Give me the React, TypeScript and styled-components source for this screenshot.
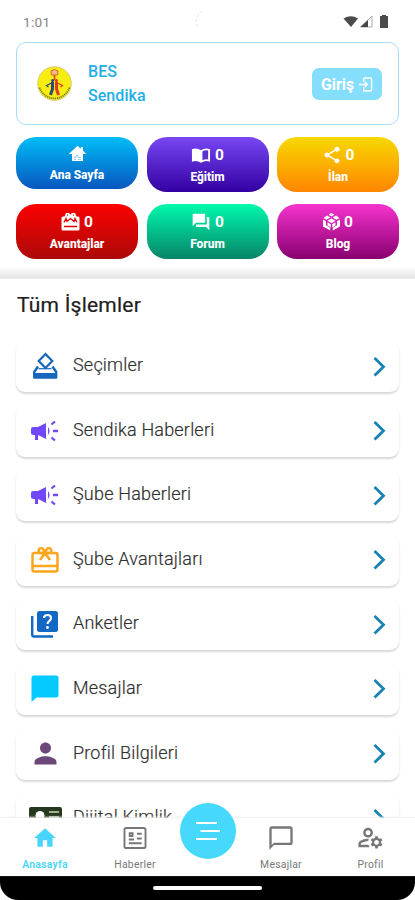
import React from "react";
import styled, { createGlobalStyle } from "styled-components";
import { MdHome, MdShare, MdForum, MdPerson, MdOutlineManageAccounts, MdChatBubbleOutline } from "react-icons/md";

const GlobalStyle = createGlobalStyle`
  * { box-sizing: border-box; }
  body { margin: 0; background: #fff; font-family: Roboto, sans-serif; overflow: hidden; }
  svg { display: block; flex: none; }
`;

const Screen = styled.main`
  width: 415px;
  height: 900px;
  display: flex;
  flex-direction: column;
  overflow: hidden;
  background: #fff;
`;

const StatusBar = styled.header`
  height: 42px;
  padding: 2px 26px 0 23px;
  display: grid;
  grid-template-columns: 172px 1fr auto;
  flex: none;
  align-items: center;
  color: #858585;
  font-size: 13.6px;
  letter-spacing: 0.3px;
`;

const ProfileCard = styled.section`
  height: 83px;
  flex: none;
  margin: 0 16px;
  padding: 0 16px 0 20px;
  display: flex;
  align-items: center;
  border: 1.5px solid #a5ddfb;
  border-radius: 10px;
`;

const Organisation = styled.div`
  flex: 1;
  margin: 1px 0 0 16px;
  color: #22aee6;
  font-size: 16px;
  font-weight: 500;
  line-height: 24px;
  letter-spacing: 0.05px;
`;

const LoginButton = styled.button`
  width: 70px;
  height: 32px;
  padding: 2px 0 0;
  border: 0;
  border-radius: 7px;
  display: flex;
  align-items: center;
  justify-content: center;
  gap: 5px;
  background: #86defd;
  color: #fff;
  font: 700 15.8px Roboto, sans-serif;
`;

const TileGrid = styled.section`
  flex: none;
  height: 143px;
  padding: 12px 16px 0;
  display: grid;
  grid-template-columns: repeat(3, 122px);
  grid-template-rows: 55px 55px;
  justify-content: space-between;
  row-gap: 12px;
`;

const Tile = styled.div<{ $from: string; $to: string; $short?: boolean }>`
  height: ${p => (p.$short ? 52 : 55)}px;
  padding-top: ${p => (p.$short ? 6 : 8)}px;
  border-radius: 20px;
  background: linear-gradient(${p => p.$from}, ${p => p.$to});
  color: #fff;
  display: flex;
  flex-direction: column;
  align-items: center;
  gap: 5px;
`;

const TileTop = styled.div`
  height: 20px;
  display: flex;
  align-items: center;
  gap: 4px;
  font-size: 15.5px;
  font-weight: 700;
`;

const TileLabel = styled.span`
  font-size: 12px;
  line-height: 15px;
  font-weight: 800;
  letter-spacing: -0.05px;
`;

const Divider = styled.div`
  height: 11px;
  flex: none;
  background: linear-gradient(#fafafa, #e5e5e5 90%, #eee);
`;

const Operations = styled.section`
  flex: 1;
  min-height: 0;
  overflow: hidden;
  padding: 11px 16px 0;
`;

const Title = styled.h1`
  margin: 0 0 20px 1px;
  color: #202020;
  font-size: 21px;
  line-height: 31px;
  font-weight: 400;
  letter-spacing: 0.22px;
  -webkit-text-stroke: 0.2px #202020;
`;

const List = styled.div`
  display: flex;
  flex-direction: column;
  gap: 13.6px;
`;

const Row = styled.div`
  height: 51px;
  flex: none;
  padding: 0 9px 2px 13px;
  display: flex;
  align-items: center;
  border-radius: 9px;
  box-shadow: 0 2px 2px #d9d9d9, 0 0 1px #f7f7f7;
  background: #fff;
`;

const IconSlot = styled.span<{ $color: string }>`
  width: 32px;
  margin-right: 12px;
  display: flex;
  justify-content: center;
  padding-top: 1px;
  color: ${p => p.$color};
`;

const RowLabel = styled.span`
  flex: 1;
  color: #303030;
  font-size: 18px;
  font-weight: 300;
  letter-spacing: 0.2px;
  -webkit-text-stroke: 0.2px #303030;
  padding-bottom: 2px;
`;

const BottomNav = styled.nav`
  height: 58px;
  flex: none;
  position: relative;
  display: grid;
  grid-template-columns: 90px 90px 56px 90px 89px;
  background: #fff;
  box-shadow: 0 -1px 2px #eee;
`;

const NavItem = styled.div<{ $active?: boolean }>`
  display: flex;
  flex-direction: column;
  align-items: center;
  padding-top: 4px;
  color: ${p => (p.$active ? "#49d5fa" : "#777")};
  font-size: 10.4px;
  font-weight: ${p => (p.$active ? 600 : 400)};
  line-height: 14px;
  letter-spacing: 0.25px;
`;

const NavIcon = styled.span`
  height: 31px;
  margin-bottom: 5px;
  display: flex;
  align-items: center;
`;

const MenuButton = styled.button`
  width: 56px;
  height: 56px;
  margin-top: -15px;
  padding: 0;
  border: 0;
  border-radius: 50%;
  display: grid;
  place-items: center;
  background: #46d9fc;
`;

const GestureBar = styled.footer`
  height: 24px;
  flex: none;
  display: flex;
  justify-content: center;
  padding-top: 10px;
  background: #000;
  border-radius: 0 0 18px 18px;
`;

const Handle = styled.span`
  width: 109px;
  height: 4px;
  border-radius: 2px;
  background: #fff;
`;

const StatusIcons = () => (
  <svg width="46" height="16" viewBox="0 0 46 16">
    <path d="M.5 4.5Q8 0 15 4.5L8 13z" fill="#4b4b4b" />
    <path d="M17.5 13L29 2v11z" fill="none" stroke="#aaa" />
    <path d="M17.5 13L25 6v7z" fill="#444" />
    <path d="M37 2h2V1h4v1h2v12h-8z" fill="#4b4b4b" />
  </svg>
);

const CameraHint = () => (
  <svg width="22" height="24" viewBox="0 0 22 24" fill="none" stroke="#ddd" strokeWidth="0.8">
    <path d="M7 1Q-2 8 3 18" strokeDasharray="3 2" />
  </svg>
);

const Emblem = () => (
  <svg width="35" height="35" viewBox="0 0 35 35">
    <circle cx="17.5" cy="17.5" r="16.8" fill="#f7ed10" stroke="#d3cc79" strokeWidth="1" />
    <path d="M2.5 21.5C8 36 27 36 32.5 21.5" fill="none" stroke="#82851e" strokeWidth="1.8" strokeDasharray="1.3 .7" />
    <path d="M14 5l3.5-1.5L21 5l-.5 4h-6z" fill="#f8b98a" stroke="#d54b28" strokeWidth=".8" />
    <path d="M17.5 9v5" stroke="#df482c" strokeWidth="1.7" />
    <circle cx="15.6" cy="14.5" r="1.5" fill="#234b73" />
    <circle cx="19.4" cy="14.5" r="1.5" fill="#dc3325" />
    <path d="M15.5 16v7l-2 6" fill="none" stroke="#274d70" strokeWidth="3" />
    <path d="M14.5 17l-5 2.5 2 1.5" fill="none" stroke="#274d70" strokeWidth="1.2" />
    <path d="M19.5 16v7l2 6" fill="none" stroke="#df3827" strokeWidth="3" />
    <path d="M20.5 17l5 2.5-2 1.5" fill="none" stroke="#df3827" strokeWidth="1.2" />
  </svg>
);

const LoginIcon = () => (
  <svg width="14" height="16" viewBox="0 0 15 17" fill="none" stroke="currentColor" strokeWidth="1.5">
    <path d="M5 5V2q0-1 1-1h6q1.5 0 1.5 1.5v11Q13.5 15 12 15H6q-1 0-1-1v-3M0 8h9M6 5l3 3-3 3" />
  </svg>
);

const CottageIcon = () => (
  <svg width="19" height="17" viewBox="0 0 19 17">
    <path d="M9.5.8l3.4 3V2h2v3.6L18.2 9H15v7H4V9H.8z" fill="currentColor" />
    <path d="M6 12.5h2v-2h2v2h3M6 14.5h2m2 0h3" fill="none" stroke="#6dbcec" strokeWidth=".7" />
  </svg>
);

const BookIcon = () => (
  <svg width="20" height="17" viewBox="0 0 21 17">
    <path d="M10.5 3Q6 0 1 2v13q5-2 9.5 1Q15 13 20 15V2q-5-2-9.5 1z" fill="currentColor" />
    <path d="M12 4q3-1.4 6-.8v9.5q-3-.5-6 .7z" fill="#5833d0" />
  </svg>
);

const GiftIcon = ({ size }: { size: number }) => (
  <svg width={size} height={size * 0.93} viewBox="0 0 28 26" fill="none" stroke="currentColor" strokeWidth="2.5" strokeLinejoin="round">
    <rect x="1.5" y="6" width="25" height="18.5" rx="2" />
    <path d="M2 19h24M14 6l-5 7M14 6l5 7M14 6H9a2.6 2.6 0 1 1 3.5-3.5zm0 0h5a2.6 2.6 0 1 0-3.5-3.5z" />
  </svg>
);

const TileGiftIcon = () => (
  <svg width="19" height="18" viewBox="0 0 19 18">
    <path d="M5 0h3l1.5 1.5L11 0h3l1.5 3.5H17q1.5 0 1.5 1.5v11q0 1.5-1.5 1.5H2Q.5 17.5.5 16V5Q.5 3.5 2 3.5h1.5z" fill="currentColor" />
    <path d="M3 9.5l2-4 1 3 3.5-3 3.5 3 1-3 2 4M3 13.5h13M6 2.2h1m5 0h1" fill="none" stroke="#e30000" strokeWidth="1.3" />
  </svg>
);

const CubeIcon = () => (
  <svg width="17" height="18" viewBox="0 0 17 18">
    <path d="M5.5 1.6L8.5 0l3 1.6-3 1.8zM4 2.4l3.5 2.1L3.5 6.8.5 5zM13 2.4L9.5 4.5l4 2.3 3-1.8zM0 6.5l3 1.8v4l4.2 2.5v2.7L0 13.5zM17 6.5l-3 1.8v4l-4.2 2.5v2.7l7.2-4zM4.5 7.8l4-2.3 4 2.3-4 2.4zM4.5 9.3l3.3 2v3.2l-3.3-2zM12.5 9.3l-3.3 2v3.2l3.3-2z" fill="currentColor" />
  </svg>
);

const VoteIcon = () => (
  <svg width="26" height="28" viewBox="0 0 26 28">
    <path d="M13.5 2l6.8 7-6.8 7-6.8-7z" fill="none" stroke="currentColor" strokeWidth="2.2" />
    <path d="M6 14.5L2.2 20v5.5h22V20l-3.7-5.5" fill="none" stroke="currentColor" strokeWidth="2.4" strokeLinejoin="round" />
    <path d="M2 21h22v5H2z" fill="currentColor" />
    <path d="M6.5 16.7h13" stroke="currentColor" strokeWidth="1.2" />
  </svg>
);

const MegaphoneIcon = () => (
  <svg width="28" height="24" viewBox="0 0 28 24" fill="currentColor">
    <path d="M2 8h5l8-4v16l-8-4v5H4v-5H2q-2 0-2-2v-4q0-2 2-2zM17 8q3 4 0 8z" />
    <path d="M22 12h5M20.5 5.5l3.5-3m-3.5 16l3.5 3" stroke="currentColor" strokeWidth="2.3" />
  </svg>
);

const SurveyIcon = () => (
  <svg width="28" height="28" viewBox="0 0 28 28">
    <rect x="6" y="1" width="21" height="21" rx="2.5" fill="currentColor" />
    <path d="M1.2 6v18.5q0 2 2 2H22" fill="none" stroke="currentColor" strokeWidth="2.4" />
    <path d="M13 8q0-3 3.5-3T20 8.3c0 2.5-3.5 2.7-3.5 5.7" fill="none" stroke="#fff" strokeWidth="2.1" />
    <circle cx="16.5" cy="17.5" r="1.4" fill="#fff" />
  </svg>
);

const MessageIcon = () => (
  <svg width="28" height="27" viewBox="0 0 28 27">
    <path d="M3 .5h22q2.5 0 2.5 2.5v17q0 2.5-2.5 2.5H5.5L.5 27V3Q.5.5 3 .5z" fill="currentColor" />
  </svg>
);

const IdentityIcon = () => (
  <svg width="33" height="23" viewBox="0 0 33 23">
    <rect width="33" height="23" rx="2" fill="#26391f" />
    <circle cx="11" cy="8.5" r="4.5" fill="#fff" />
    <path d="M4 20q1-7 7-7t7 7z" fill="#fff" />
    <path d="M20 5h10M20 10h10M20 15h10" stroke="#a4b191" strokeWidth="2" />
  </svg>
);

const NewsIcon = () => (
  <svg width="24" height="22" viewBox="0 0 24 23" fill="none" stroke="currentColor" strokeWidth="2">
    <rect x="1" y="1" width="22" height="21" rx="2" />
    <path d="M5.5 13H11M14 7h5M14 12h5M5.5 17H19" />
    <rect x="6.5" y="6.5" width="3" height="3" />
  </svg>
);

const Chevron = () => (
  <svg width="21" height="24" viewBox="0 0 21 24" fill="none" stroke="#1683b2" strokeWidth="2.8">
    <path d="M5.5 4l9 8.8-9 8.8" />
  </svg>
);

const MenuIcon = () => (
  <svg width="26" height="20" viewBox="0 0 26 20" fill="none" stroke="#fff" strokeWidth="2">
    <path d="M1 2h21M5.5 10H25M1 18h21" />
  </svg>
);

const tiles = [
  { label: "Ana Sayfa", from: "#00bdf7", to: "#0856bf", icon: <CottageIcon />, short: true },
  { label: "Eğitim", from: "#7847f3", to: "#3400a2", icon: <BookIcon /> },
  { label: "İlan", from: "#f7d900", to: "#ff8500", icon: <MdShare size={20} /> },
  { label: "Avantajlar", from: "#fc0000", to: "#ac0909", icon: <TileGiftIcon /> },
  { label: "Forum", from: "#00f9ad", to: "#078567", icon: <MdForum size={20} /> },
  { label: "Blog", from: "#f633cf", to: "#88006e", icon: <CubeIcon /> },
];

const rows = [
  { label: "Seçimler", color: "#1467bd", icon: <VoteIcon /> },
  { label: "Sendika Haberleri", color: "#7047fa", icon: <MegaphoneIcon /> },
  { label: "Şube Haberleri", color: "#7047fa", icon: <MegaphoneIcon /> },
  { label: "Şube Avantajları", color: "#faa51b", icon: <GiftIcon size={28} /> },
  { label: "Anketler", color: "#1268c2", icon: <SurveyIcon /> },
  { label: "Mesajlar", color: "#05caff", icon: <MessageIcon /> },
  { label: "Profil Bilgileri", color: "#6c477a", icon: <MdPerson size={33} /> },
  { label: "Dijital Kimlik", color: "#26391f", icon: <IdentityIcon /> },
];

export default function App() {
  return (
    <>
      <GlobalStyle />
      <Screen>
        <StatusBar><span>1:01</span><CameraHint /><StatusIcons /></StatusBar>
        <ProfileCard>
          <Emblem />
          <Organisation>BES<br />Sendika</Organisation>
          <LoginButton>Giriş <LoginIcon /></LoginButton>
        </ProfileCard>
        <TileGrid>
          {tiles.map(tile => (
            <Tile key={tile.label} $from={tile.from} $to={tile.to} $short={tile.short}>
              <TileTop>{tile.icon}{!tile.short && <span>0</span>}</TileTop>
              <TileLabel>{tile.label}</TileLabel>
            </Tile>
          ))}
        </TileGrid>
        <Divider />
        <Operations>
          <Title>Tüm İşlemler</Title>
          <List>
            {rows.map(row => (
              <Row key={row.label}>
                <IconSlot $color={row.color}>{row.icon}</IconSlot>
                <RowLabel>{row.label}</RowLabel>
                <Chevron />
              </Row>
            ))}
          </List>
        </Operations>
        <BottomNav>
          <NavItem $active><NavIcon><MdHome size={26} /></NavIcon>Anasayfa</NavItem>
          <NavItem><NavIcon><NewsIcon /></NavIcon>Haberler</NavItem>
          <MenuButton aria-label="Menü"><MenuIcon /></MenuButton>
          <NavItem><NavIcon><MdChatBubbleOutline size={28} /></NavIcon>Mesajlar</NavItem>
          <NavItem><NavIcon><MdOutlineManageAccounts size={29} /></NavIcon>Profil</NavItem>
        </BottomNav>
        <GestureBar><Handle /></GestureBar>
      </Screen>
    </>
  );
}
